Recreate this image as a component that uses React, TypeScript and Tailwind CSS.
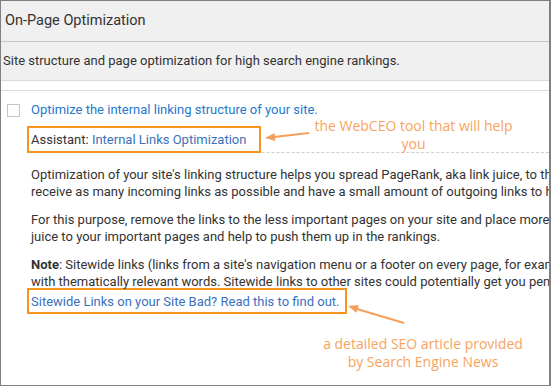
import React from "react";

// annotation arrows drawn over the panel
function Arrows() {
  return (
    <svg className="absolute inset-0 pointer-events-none" width={551} height={386}>
      <line x1={308} y1={132} x2={273} y2={136} stroke="#f5a05a" strokeWidth={2} />
      <polygon points="264,137 273.5,131.9 274.4,139.9" fill="#f5a05a" />
      <line x1={403} y1={322} x2={356} y2={308} stroke="#f5a05a" strokeWidth={2} />
      <polygon points="347,305 357.7,304.1 355.4,311.7" fill="#f5a05a" />
    </svg>
  );
}

export default function App() {
  return (
    <div className="relative w-[551px] h-[386px] overflow-hidden bg-white border border-r-2 border-[#808080] font-['Roboto',sans-serif] text-[#333]">
      <div className="h-[41px] bg-[#f0f0f0] border-b border-[#c6c6c6] flex items-center px-[4px] text-[14.5px]">
        On-Page Optimization
      </div>
      <div className="h-[39px] bg-[#f0f0f0] border-b border-[#dadada] flex items-center px-[2px] text-[13px]">
        Site structure and page optimization for high search engine rankings.
      </div>
      <div className="h-[10px] border-b border-[#dadada]" />

      <div className="text-[13px]">
        <div className="flex items-center h-[20px] mt-[9px] pl-[6px]">
          <span className="block w-[13px] h-[13px] border border-[#c4c4c4] bg-white" />
          <span className="ml-[11px] text-[#2479cc] whitespace-nowrap">
            Optimize the internal linking structure of your site.
          </span>
        </div>

        <div className="ml-[26px] mt-[6px] border-b border-dashed border-[#cfcfcf] flex">
          <div className="w-[234px] h-[27px] border-2 border-[#f7941d] flex items-center px-[2px] mb-[-1px] whitespace-nowrap">
            Assistant:&nbsp;<span className="text-[#3b72b9]">Internal Links Optimization</span>
          </div>
        </div>

        <div className="ml-[30px] pt-[13px] leading-[17px]">
          <p className="mb-[11px]">
            <span className="block whitespace-nowrap">
              Optimization of your site's linking structure helps you spread PageRank, aka link juice, to the most important pages of your site.
            </span>
            <span className="block whitespace-nowrap">
              receive as many incoming links as possible and have a small amount of outgoing links to high-value pages only.
            </span>
          </p>
          <p className="mb-[11px]">
            <span className="block whitespace-nowrap">
              For this purpose, remove the links to the less important pages on your site and place more links to the important ones.
            </span>
            <span className="block whitespace-nowrap">
              juice to your important pages and help to push them up in the rankings.
            </span>
          </p>
          <p>
            <span className="block whitespace-nowrap">
              <b className="font-bold">Note</b>: Sitewide links (links from a site's navigation menu or a footer on every page, for example) should be
            </span>
            <span className="block whitespace-nowrap">
              with thematically relevant words. Sitewide links to other sites could potentially get you penalized.
            </span>
          </p>
          <div className="ml-[-4px] mt-[-2px] w-[320px] h-[26px] border-2 border-[#f7941d] flex items-center px-[2px] text-[#3b6fc0] whitespace-nowrap">
            Sitewide Links on your Site Bad? Read this to find out.
          </div>
        </div>
      </div>

      <div className="absolute left-[300px] top-[116px] w-[225px] text-center leading-[18px] text-[14px] text-[#f7a460] font-['Open_Sans',sans-serif]">
        the WebCEO tool that will help
        <br />
        you
      </div>
      <div className="absolute left-[312px] top-[334px] w-[220px] text-center leading-[18px] text-[14px] text-[#f7a460] font-['Open_Sans',sans-serif]">
        a detailed SEO article provided
        <br />
        by Search Engine News
      </div>

      <Arrows />
    </div>
  );
}
